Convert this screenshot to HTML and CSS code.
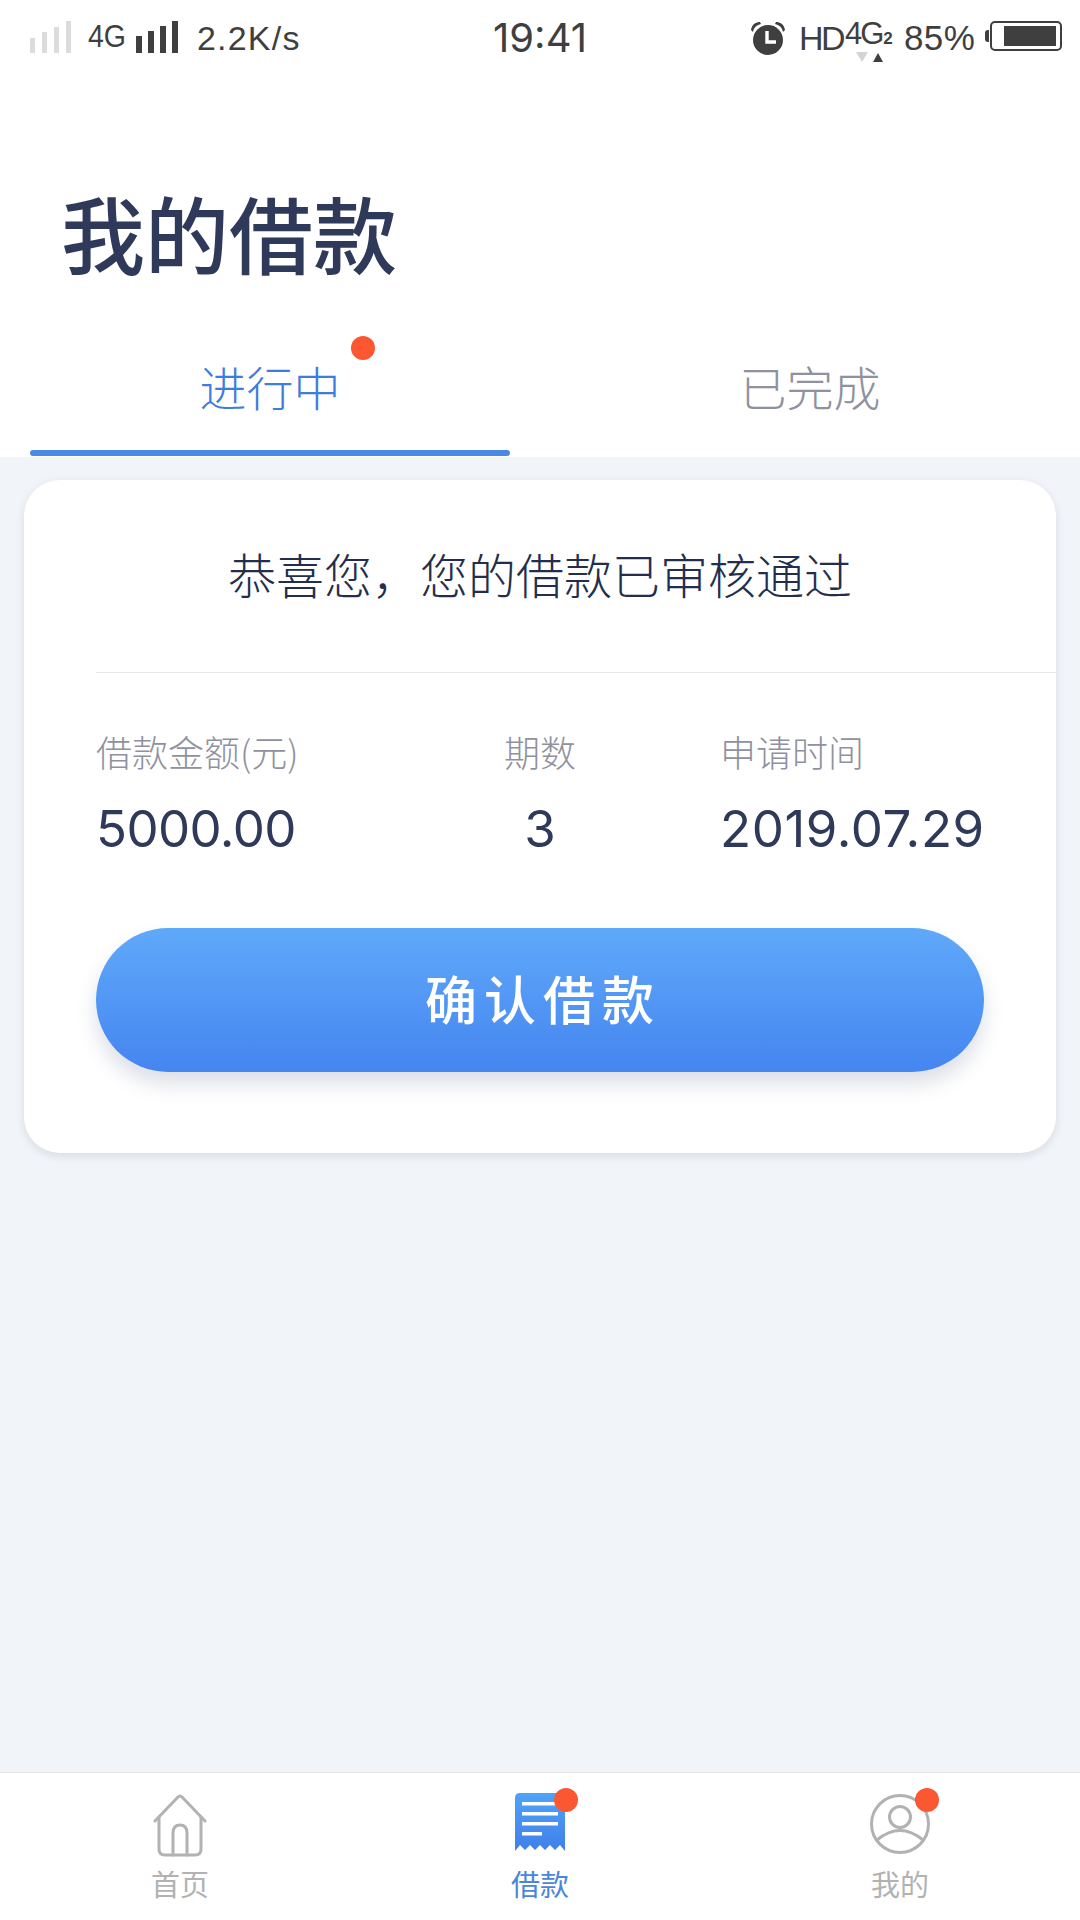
FILE: index.html
```html
<!DOCTYPE html>
<html lang="zh-CN">
<head>
    <meta charset="UTF-8">
    <meta name="viewport" content="width=device-width, initial-scale=1.0">
    <title>我的借款</title>
    <link rel="stylesheet" href="styles.css">
</head>
<body>
    <div class="statusbar">
        <div class="status-left">
            <svg class="signal signal-off" width="41" height="32" viewBox="0 0 41 32"><rect x="0" y="17" width="5" height="15"/><rect x="12" y="11" width="5" height="21"/><rect x="24" y="6" width="5" height="26"/><rect x="36" y="0" width="5" height="32"/></svg>
            <span class="net">4G</span>
            <svg class="signal signal-on" width="42" height="32" viewBox="0 0 42 32"><rect x="0" y="15" width="6" height="17"/><rect x="12" y="10" width="6" height="22"/><rect x="24" y="5" width="6" height="27"/><rect x="36" y="0" width="6" height="32"/></svg>
            <span class="speed">2.2K/s</span>
        </div>
        <div class="time">19:41</div>
        <div class="status-right">
            <svg class="alarm" width="36" height="34" viewBox="0 0 36 34"><circle cx="18" cy="19" r="15" fill="#3f3f3f"/><path d="M1 9 C2 3 6 1 10 1 L11 3 C7 4 4 6 3 11 Z M35 9 C34 3 30 1 26 1 L25 3 C29 4 32 6 33 11 Z" fill="#3f3f3f"/><path d="M17 10 V21 H26" fill="none" stroke="#fff" stroke-width="3.4"/></svg>
            <span class="hd">HD</span>
            <span class="net-stack">
                <span class="net-big">4G<small>2</small></span>
                <svg class="arrows" width="28" height="11" viewBox="0 0 28 11"><path d="M0 0 H12 L6 10 Z" fill="#d4d4d4"/><path d="M17 10 H27 L22 1 Z" fill="#3f3f3f"/></svg>
            </span>
            <span class="battery-text">85%</span>
            <span class="battery-nub"></span>
            <span class="battery"><span class="battery-fill"></span></span>
        </div>
    </div>

    <h1 class="page-title">我的借款</h1>

    <div class="tabs">
        <div class="tab tab-active">
            <span class="tab-label">进行中<i class="dot tab-dot"></i></span>
            <span class="tab-line"></span>
        </div>
        <div class="tab">
            <span class="tab-label">已完成</span>
            <span class="tab-line"></span>
        </div>
    </div>

    <div class="main">
        <div class="card">
            <div class="card-title">恭喜您，您的借款已审核通过</div>
            <div class="card-body">
                <div class="info">
                    <div class="info-col">
                        <div class="info-label">借款金额(元)</div>
                        <div class="info-value value-amount">5000.00</div>
                    </div>
                    <div class="info-col info-mid">
                        <div class="info-label">期数</div>
                        <div class="info-value">3</div>
                    </div>
                    <div class="info-col info-end">
                        <div class="info-label">申请时间</div>
                        <div class="info-value value-date">2019.07.29</div>
                    </div>
                </div>
                <div class="confirm-btn">确认借款</div>
            </div>
        </div>
    </div>

    <div class="tabbar">
        <div class="nav-item">
            <span class="nav-icon">
                <svg width="54" height="64" viewBox="0 0 54 64" fill="none" stroke="#b2b2b2" stroke-width="3" stroke-linecap="round" stroke-linejoin="round"><path d="M2 28 L25 4 Q27 2 29 4 L52 28"/><path d="M6 24 V56 Q6 62 12 62 H42 Q48 62 48 56 V24"/><path d="M20 62 V40 Q20 32 27 32 Q34 32 34 40 V62"/></svg>
            </span>
            <span class="nav-label">首页</span>
        </div>
        <div class="nav-item nav-active">
            <span class="nav-icon">
                <svg width="50" height="58" viewBox="0 0 50 58"><defs><linearGradient id="receipt" x1="0" y1="0" x2="0" y2="1"><stop offset="0" stop-color="#4fa3f7"/><stop offset="1" stop-color="#3f80ea"/></linearGradient></defs><path d="M5 0 H50 V58 L45 52 L40 57 L35 52 L30 57 L25 52 L20 57 L15 52 L10 57 L5 52 L0 58 V5 Q0 0 5 0 Z" fill="url(#receipt)"/><g fill="#fff"><rect x="7" y="9" width="36" height="3.5"/><rect x="7" y="19" width="36" height="3.5"/><rect x="7" y="29" width="36" height="3.5"/><rect x="7" y="39" width="20" height="3.5"/></g></svg>
                <i class="dot nav-dot"></i>
            </span>
            <span class="nav-label">借款</span>
        </div>
        <div class="nav-item nav-me">
            <span class="nav-icon">
                <svg width="60" height="62" viewBox="0 0 60 62" fill="none" stroke="#b2b2b2" stroke-width="3"><circle cx="30" cy="31" r="28.5"/><circle cx="30" cy="24" r="10.5"/><path d="M7 47 Q30 28 53 47"/></svg>
                <i class="dot nav-dot"></i>
            </span>
            <span class="nav-label">我的</span>
        </div>
    </div>
</body>
</html>
```

FILE: styles.css
```css
* {
    box-sizing: border-box;
}
body {
    margin: 0;
    width: 1080px;
    height: 1920px;
    display: flex;
    flex-direction: column;
    background: #fff;
    font-family: "Noto Sans CJK SC", "Noto Sans", sans-serif;
    color: #2f3a5a;
}

/* status bar */
.statusbar {
    height: 75px;
    padding: 21px 18px 0 18px;
    display: grid;
    grid-template-columns: 1fr auto 1fr;
    align-items: flex-start;
    font-family: "Liberation Sans", sans-serif;
    color: #3f3f3f;
}
.status-left,
.status-right {
    display: flex;
    align-items: flex-start;
}
.status-left {
    padding-left: 12px;
}
.status-right {
    justify-content: flex-end;
}
.signal {
    display: block;
    fill: #3f3f3f;
}
.signal-off {
    fill: #dcdcdc;
}
.net {
    font-size: 31px;
    line-height: 32px;
    margin: 0 11px 0 17px;
    transform: scaleX(0.92);
    transform-origin: left;
    width: 37px;
}
.speed {
    font-size: 34px;
    line-height: 34px;
    letter-spacing: 1.2px;
    margin-left: 19px;
}
.time {
    font-size: 40px;
    line-height: 38px;
    font-family: "Inter", sans-serif;
    width: 96px;
    text-align: center;
    margin-top: -2px;
}
.alarm {
    display: block;
    margin-right: 13px;
}
.hd {
    font-size: 34px;
    line-height: 34px;
    width: 41px;
    letter-spacing: -2.5px;
}
.net-stack {
    width: 50px;
    margin-left: 5px;
    display: flex;
    flex-direction: column;
}
.net-big {
    font-size: 31px;
    line-height: 26px;
    letter-spacing: -2px;
    white-space: nowrap;
}
.net-big small {
    font-size: 17px;
    font-weight: bold;
    letter-spacing: 0;
    margin-left: 1px;
}
.arrows {
    display: block;
    margin: 0 0 0 11px;
}
.battery-text {
    font-size: 35px;
    line-height: 34px;
    margin-left: 9px;
    width: 74px;
    letter-spacing: 0.4px;
}
.battery-nub {
    width: 4px;
    height: 12px;
    margin: 9px 1px 0 7px;
    background: #3f3f3f;
    border-radius: 3px 0 0 3px;
}
.battery {
    width: 72px;
    height: 30px;
    border: 2px solid #3f3f3f;
    border-radius: 5px;
    padding: 3px 4px 3px 12px;
    display: flex;
}
.battery-fill {
    flex: 1;
    background: #3f3f3f;
}

/* header */
.page-title {
    margin: 0;
    padding: 107px 0 0 61px;
    height: 250px;
    font-size: 84px;
    line-height: 100px;
    font-weight: 500;
    color: #2f3a5a;
}
.tabs {
    padding: 0 30px;
    display: grid;
    grid-template-columns: 1fr 1fr;
    column-gap: 60px;
    height: 132px;
}
.tab {
    display: flex;
    flex-direction: column;
    align-items: center;
    justify-content: flex-end;
    font-size: 47px;
    font-weight: 300;
    color: #8f929e;
}
.tab-label {
    position: relative;
    line-height: 64px;
    margin-bottom: 32px;
}
.tab-line {
    width: 100%;
    height: 6px;
    border-radius: 3px;
    margin-bottom: 1px;
}
.tab-active {
    color: #3f7ddc;
}
.tab-active .tab-line {
    background: #4c88e6;
}
.dot {
    display: block;
    width: 24px;
    height: 24px;
    border-radius: 50%;
    background: #fb5733;
}
.tab-dot {
    position: absolute;
    top: -18px;
    right: -34px;
}

/* card */
.main {
    flex: 1;
    background: #f1f4f8;
    padding: 23px 24px 0;
}
.card {
    height: 673px;
    background: #fff;
    border-radius: 36px;
    box-shadow: 0 3px 8px rgba(60, 70, 100, 0.14);
}
.card-title {
    height: 193px;
    margin-left: 72px;
    border-bottom: 1px solid #e6e8ec;
    padding-right: 72px;
    padding-top: 63px;
    text-align: center;
    font-size: 48px;
    font-weight: 300;
    line-height: 60px;
    color: #232e4e;
}
.card-body {
    padding: 54px 72px 0;
}
.info {
    display: grid;
    grid-template-columns: 381px 126px 1fr;
}
.info-mid {
    text-align: center;
}
.info-end {
    padding-left: 117px;
}
.info-label {
    font-size: 36px;
    font-weight: 300;
    line-height: 48px;
    color: #8f929e;
    white-space: nowrap;
}
.info-value {
    margin-top: 24px;
    font-family: "Inter", sans-serif;
    font-size: 51px;
    line-height: 60px;
    color: #2f3a5a;
    white-space: nowrap;
}
.value-amount {
    letter-spacing: -0.6px;
}
.value-date {
    letter-spacing: 0.6px;
}
.confirm-btn {
    margin-top: 69px;
    height: 144px;
    border-radius: 72px;
    background: linear-gradient(180deg, #5fa9fa 0%, #4585f0 100%);
    box-shadow: 0 12px 20px rgba(60, 80, 120, 0.18);
    color: #fff;
    text-align: center;
    font-size: 52px;
    line-height: 140px;
    font-weight: 500;
    letter-spacing: 7px;
    padding-left: 6px;
}

/* bottom nav */
.tabbar {
    height: 148px;
    border-top: 1px solid #e3e5e8;
    background: #fff;
    display: grid;
    grid-template-columns: repeat(3, 1fr);
}
.nav-item {
    display: flex;
    flex-direction: column;
    align-items: center;
    padding-top: 20px;
    color: #b2b2b2;
    font-size: 29px;
}
.nav-icon {
    position: relative;
    display: block;
    height: 64px;
    margin-left: -1px;
}
.nav-icon svg {
    display: block;
}
.nav-label {
    line-height: 40px;
    margin-top: 6px;
}
.nav-active {
    color: #4a86dc;
}
.nav-dot {
    position: absolute;
    top: -5px;
    right: -13px;
}
.nav-me .nav-dot {
    right: -9px;
}
```
